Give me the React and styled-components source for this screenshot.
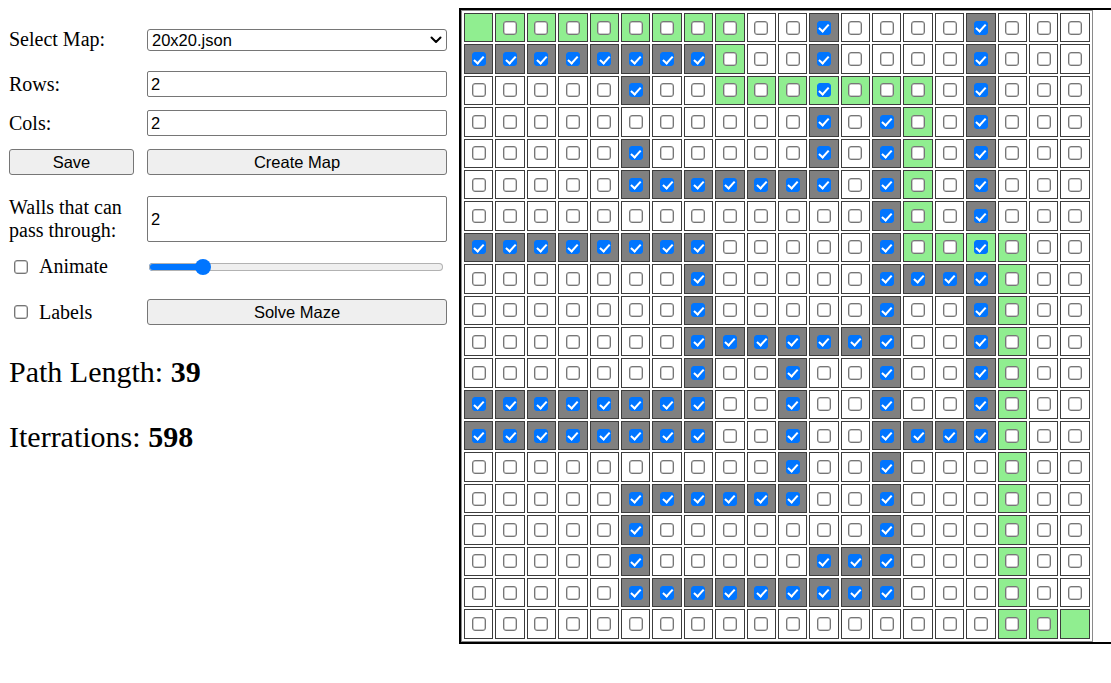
import React from "react";
import styled, { createGlobalStyle, css } from "styled-components";

const GlobalStyle = createGlobalStyle`
  html, body { overflow: hidden; }
  body {
    margin: 8px 0 0 8px;
    font-family: "Liberation Serif", "Times New Roman", serif;
    color: #000;
    background: #fff;
  }
`;

const MAZE = [
  "Sgggggggg..#....#...",
  "########g..#....#...",
  ".....#..gggGggg.#...",
  "...........#.#g.#...",
  ".....#.....#.#g.#...",
  ".....#######.#g.#...",
  ".............#g.#...",
  "########.....#ggGg..",
  ".......#.....####g..",
  ".......#.....#..#g..",
  ".......#######..#g..",
  ".......#..#..#..#g..",
  "########..#..#..#g..",
  "########..#..####g..",
  "..........#..#...g..",
  ".....######..#...g..",
  ".....#.......#...g..",
  ".....#.....###...g..",
  ".....#########...g..",
  ".................ggS",
];

const checkbox = css`
  appearance: none;
  -webkit-appearance: none;
  box-sizing: border-box;
  position: relative;
  flex: none;
  width: 14px;
  height: 14px;
  border: 1px solid #767676;
  border-radius: 3px;
  background: #fff;
  box-shadow: inset 0 0 0 0.5px #9a9a9a;
  &:checked {
    background: #0075ff;
    border-color: #0075ff;
    box-shadow: none;
  }
  &:checked::after {
    content: "";
    position: absolute;
    left: 3.5px;
    top: 0.5px;
    width: 4px;
    height: 7.5px;
    border: solid #fff;
    border-width: 0 2.2px 2.2px 0;
    transform: rotate(42deg);
  }
`;

const Page = styled.div`
  display: flex;
  align-items: flex-start;
`;

const Panel = styled.div`
  width: 451px;
  flex: none;
  display: flex;
  flex-direction: column;
`;

const Row = styled.div`
  display: grid;
  grid-template-columns: 126px 300px;
  column-gap: 13px;
  align-items: ${(p) => (p.$stretch ? "stretch" : "center")};
  margin-top: ${(p) => p.$mt || 0}px;
`;

const Label = styled.label`
  font-size: 20px;
  line-height: 23px;
  padding-left: 1px;
`;

const CheckLabel = styled.label`
  display: flex;
  align-items: center;
  font-size: 20px;
  line-height: 23px;
`;

const SmallCheck = styled.input`
  ${checkbox}
  margin: 0 11px 0 6px;
`;

const SelectWrap = styled.div`
  position: relative;
  width: 300px;
  height: 22px;
`;

const Select = styled.select`
  appearance: none;
  -webkit-appearance: none;
  box-sizing: border-box;
  width: 300px;
  height: 22px;
  font-family: "Liberation Sans", Arial, sans-serif;
  font-size: 16.5px;
  color: #000;
  border: 1px solid #767676;
  border-radius: 3px;
  background: #fff;
  padding: 0 24px 0 4px;
  margin: 0;
`;

const Chevron = styled.svg`
  position: absolute;
  right: 5px;
  top: 7px;
  width: 12px;
  height: 8px;
  pointer-events: none;
`;

const TextInput = styled.input`
  box-sizing: border-box;
  width: 300px;
  height: ${(p) => (p.$tall ? "auto" : "26px")};
  font-family: "Liberation Sans", Arial, sans-serif;
  font-size: 16.5px;
  color: #000;
  border: 1px solid #767676;
  border-radius: 2px;
  padding: 1px 3px;
  margin: 0;
`;

const Button = styled.button`
  box-sizing: border-box;
  width: ${(p) => p.$w}px;
  height: 26px;
  margin: 0 0 0 ${(p) => p.$ml || 0}px;
  font-family: "Liberation Sans", Arial, sans-serif;
  font-size: 16.5px;
  color: #000;
  background: #efefef;
  border: 1px solid #767676;
  border-radius: 3px;
  padding: 1px 6px;
`;

const Slider = styled.input`
  appearance: none;
  -webkit-appearance: none;
  width: 294px;
  height: 16px;
  margin: 2px;
  background: transparent;
  &::-webkit-slider-runnable-track {
    height: 8px;
    border-radius: 4px;
    background: linear-gradient(to right, #0075ff 0 18.5%, #efefef 18.5% 100%);
    box-shadow: inset 0 0 0 1px #b2b2b2;
  }
  &::-webkit-slider-thumb {
    -webkit-appearance: none;
    appearance: none;
    width: 16px;
    height: 16px;
    margin-top: -4px;
    border: none;
    border-radius: 50%;
    background: #0075ff;
  }
`;

const Stat = styled.p`
  font-size: 30px;
  line-height: 34.5px;
  margin: 30px 0 0;
  padding-left: 1px;
`;

const Board = styled.div`
  flex: 1;
  border: 2px solid #000;
  border-right: none;
`;

const Grid = styled.div`
  display: grid;
  width: max-content;
  grid-template-columns: repeat(20, 29.4px);
  grid-auto-rows: 29.4px;
  gap: 2px;
  padding: 2px;
  border: 1px solid #8a8a8a;
`;

const CELL_BG = { ".": "#ffffff", "#": "#808080", g: "#90ee90", G: "#90ee90", S: "#90ee90" };

const Cell = styled.div`
  box-sizing: border-box;
  display: flex;
  align-items: center;
  justify-content: center;
  border: 1px solid #3c3c3c;
  background: ${(p) => CELL_BG[p.$kind]};
`;

const CellBox = styled.input`
  ${checkbox}
  margin: 0;
`;

export default function App() {
  return (
    <>
      <GlobalStyle />
      <Page>
        <Panel>
          <Row $mt={20}>
            <Label>Select Map:</Label>
            <SelectWrap>
              <Select defaultValue="20x20.json">
                <option>20x20.json</option>
              </Select>
              <Chevron viewBox="0 0 12 8" aria-hidden="true">
                <path d="M1.5 1.5 L6 6 L10.5 1.5" fill="none" stroke="#000" strokeWidth="2" strokeLinecap="round" strokeLinejoin="round" />
              </Chevron>
            </SelectWrap>
          </Row>
          <Row $mt={20}>
            <Label>Rows:</Label>
            <TextInput type="text" defaultValue="2" />
          </Row>
          <Row $mt={13}>
            <Label>Cols:</Label>
            <TextInput type="text" defaultValue="2" />
          </Row>
          <Row $mt={13}>
            <Button $w={125} $ml={1}>Save</Button>
            <Button $w={300}>Create Map</Button>
          </Row>
          <Row $mt={21} $stretch>
            <Label>Walls that can pass through:</Label>
            <TextInput $tall type="text" defaultValue="2" />
          </Row>
          <Row $mt={13}>
            <CheckLabel>
              <SmallCheck type="checkbox" />
              Animate
            </CheckLabel>
            <Slider type="range" min="0" max="100" step="0.5" defaultValue="16.5" />
          </Row>
          <Row $mt={21}>
            <CheckLabel>
              <SmallCheck type="checkbox" />
              Labels
            </CheckLabel>
            <Button $w={300}>Solve Maze</Button>
          </Row>
          <Stat>
            Path Length: <b>39</b>
          </Stat>
          <Stat>
            Iterrations: <b>598</b>
          </Stat>
        </Panel>
        <Board>
          <Grid>
            {MAZE.map((row, r) =>
              row.split("").map((k, c) => (
                <Cell key={`${r}-${c}`} $kind={k}>
                  {k !== "S" && (
                    <CellBox type="checkbox" defaultChecked={k === "#" || k === "G"} />
                  )}
                </Cell>
              ))
            )}
          </Grid>
        </Board>
      </Page>
    </>
  );
}
